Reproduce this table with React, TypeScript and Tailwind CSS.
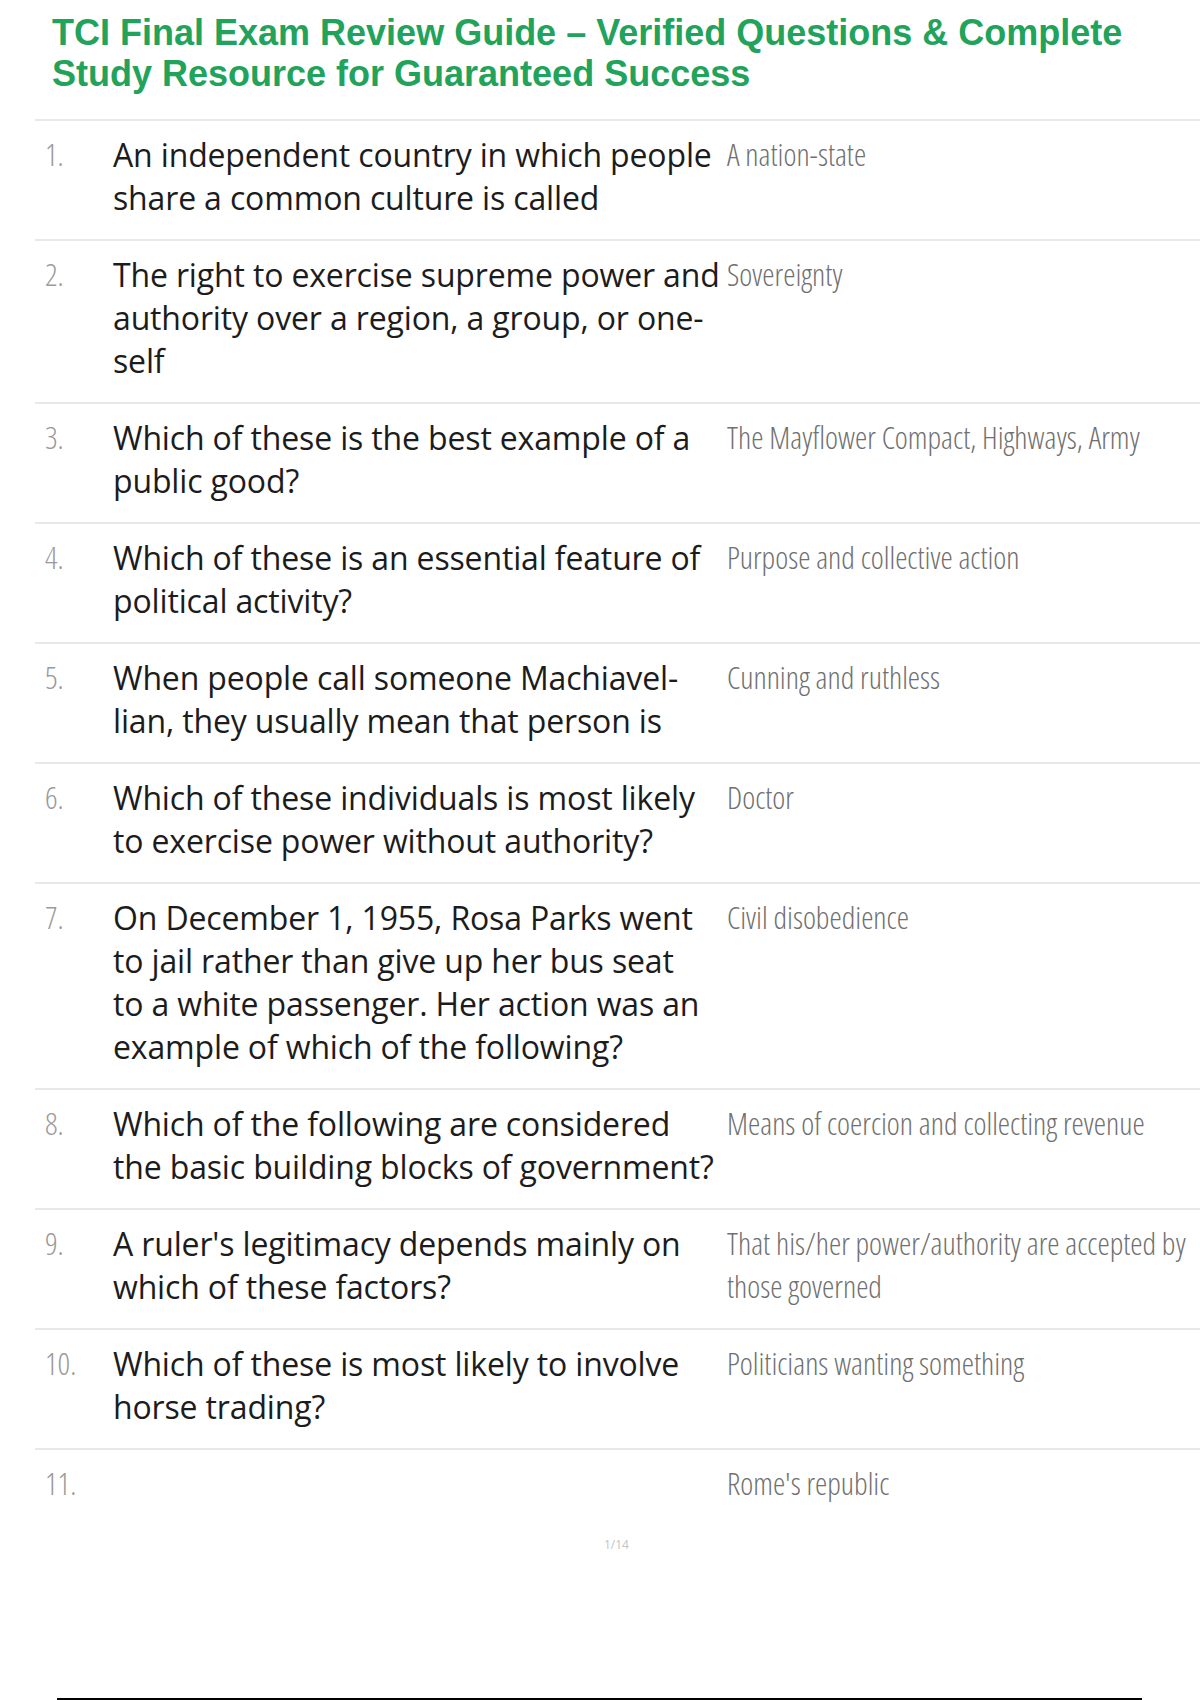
import React from "react";

const questions = [
  {
    n: "1.",
    q: ["An independent country in which people", "share a common culture is called"],
    a: ["A nation-state"],
  },
  {
    n: "2.",
    q: ["The right to exercise supreme power and", "authority over a region, a group, or one-", "self"],
    a: ["Sovereignty"],
  },
  {
    n: "3.",
    q: ["Which of these is the best example of a", "public good?"],
    a: ["The Mayflower Compact, Highways, Army"],
  },
  {
    n: "4.",
    q: ["Which of these is an essential feature of", "political activity?"],
    a: ["Purpose and collective action"],
  },
  {
    n: "5.",
    q: ["When people call someone Machiavel-", "lian, they usually mean that person is"],
    a: ["Cunning and ruthless"],
  },
  {
    n: "6.",
    q: ["Which of these individuals is most likely", "to exercise power without authority?"],
    a: ["Doctor"],
  },
  {
    n: "7.",
    q: [
      "On December 1, 1955, Rosa Parks went",
      "to jail rather than give up her bus seat",
      "to a white passenger. Her action was an",
      "example of which of the following?",
    ],
    a: ["Civil disobedience"],
  },
  {
    n: "8.",
    q: ["Which of the following are considered", "the basic building blocks of government?"],
    a: ["Means of coercion and collecting revenue"],
  },
  {
    n: "9.",
    q: ["A ruler's legitimacy depends mainly on", "which of these factors?"],
    a: ["That his/her power/authority are accepted by", "those governed"],
  },
  {
    n: "10.",
    q: ["Which of these is most likely to involve", "horse trading?"],
    a: ["Politicians wanting something"],
  },
  {
    n: "11.",
    q: [],
    a: ["Rome's republic"],
  },
];

const bodyFont = { fontFamily: '"Open Sans", "Noto Sans", sans-serif' };

export default function App() {
  return (
    <div className="flex h-[1700px] w-[1200px] flex-col overflow-hidden bg-white">
      {/* Title */}
      <h1
        className="pl-[52px] pt-[12px] text-[36px] font-bold leading-[41px] text-[#21a35b]"
        style={{ fontFamily: '"Liberation Sans", Arial, sans-serif' }}
      >
        TCI Final Exam Review Guide – Verified Questions &amp; Complete
        <br />
        Study Resource for Guaranteed Success
      </h1>

      {/* Question rows */}
      <div className="ml-[35px] mt-[25px]" style={bodyFont}>
        {questions.map((item) => (
          <div
            key={item.n}
            className="flex border-t-2 border-[#e8e8e8] pt-[12px] pb-[20px] leading-[43px]"
          >
            <div className="w-[78px] shrink-0 pl-[10px] text-[31px] font-light text-[#9a9a9a] font-stretch-condensed">
              {item.n}
            </div>
            <div className="w-[614px] shrink-0 pr-[4px] text-[32px] font-medium tracking-[-0.15px] text-[#1c1c1c]">
              {item.q.map((line) => (
                <div key={line}>{line}</div>
              ))}
            </div>
            <div className="flex-1 text-[31px] font-light text-[#707070] font-stretch-condensed">
              {item.a.map((line) => (
                <div key={line}>{line}</div>
              ))}
            </div>
          </div>
        ))}
      </div>

      {/* Page number */}
      <div
        className="mt-[11px] pl-[604px] text-[12px] text-[#c4c4c4]"
        style={bodyFont}
      >
        1/14
      </div>

      <div className="mt-auto ml-[57px] h-[2px] w-[1085px] bg-black" />
    </div>
  );
}
